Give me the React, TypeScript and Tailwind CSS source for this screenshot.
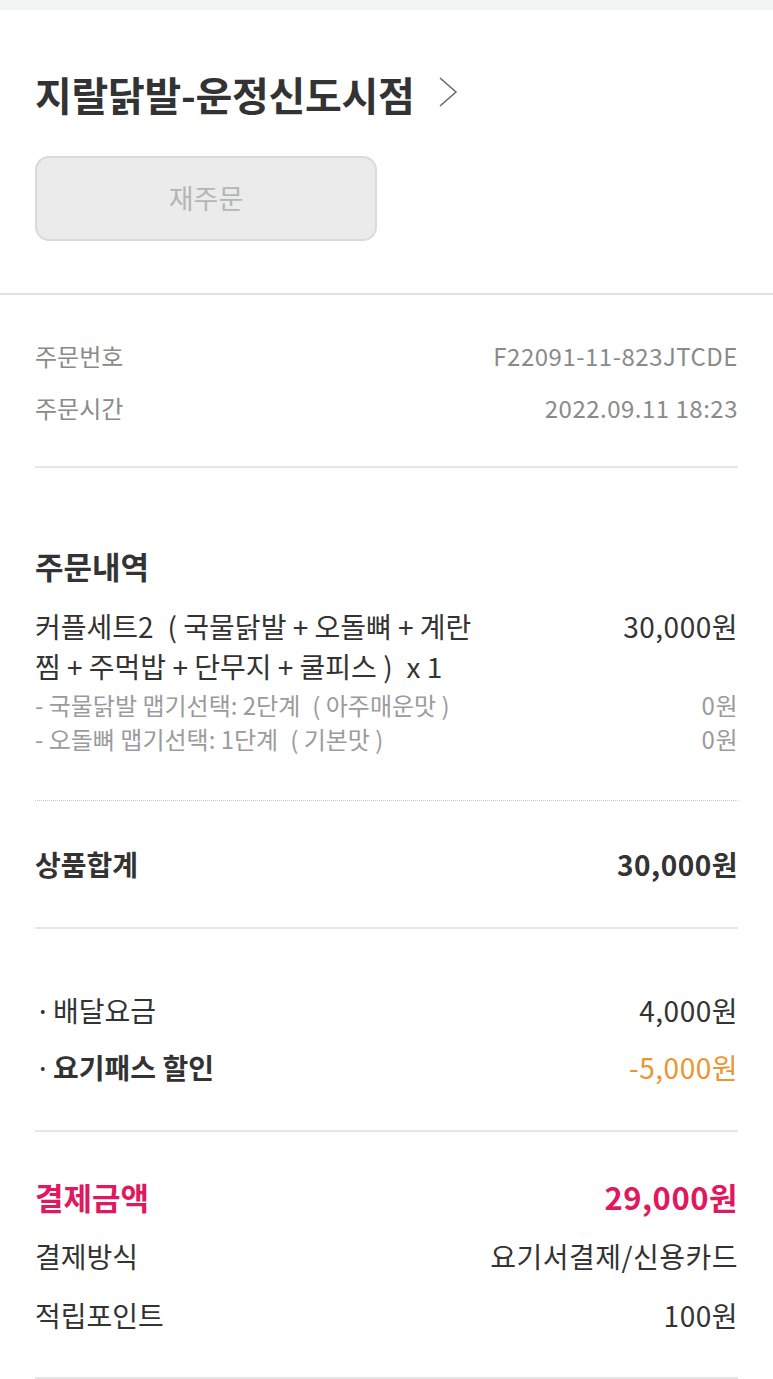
import React from 'react'

const font = { fontFamily: '"Noto Sans CJK KR", "Noto Sans", sans-serif' }

function Row({ label, value, className = '' }: { label: React.ReactNode; value: React.ReactNode; className?: string }) {
  return (
    <div className={`flex items-center justify-between ${className}`}>
      <span>{label}</span>
      <span className="tracking-[0.5px]">{value}</span>
    </div>
  )
}

export default function App() {
  return (
    <div className="w-[773px] min-h-[1379px] bg-white text-[#333]" style={font}>
      <div className="h-[10px] bg-[#f1f4f4]" />

      {/* 가게 정보 */}
      <div className="px-[35px] pt-[62px] pb-[52px]">
        <div className="flex items-center gap-[22px]">
          <h1 className="text-[40px] leading-[44px] font-bold tracking-[-0.3px] text-[#333]">지랄닭발-운정신도시점</h1>
          <svg width="22" height="32" viewBox="0 0 22 32" fill="none" className="mt-[-4px]">
            <polyline points="3,2 19,16 3,30" stroke="#666" strokeWidth="1.5" fill="none" />
          </svg>
        </div>
        <button className="mt-[40px] w-[342px] h-[85px] rounded-[14px] bg-[#ebebeb] border-2 border-[#dadada] text-[27px] text-[#b5b5b5]">
          재주문
        </button>
      </div>
      <div className="h-[2px] bg-[#e1e1e1]" />

      <div className="px-[35px]">
        {/* 주문번호 */}
        <div className="pt-[45px] pb-[42px] text-[24px] leading-[32px] text-[#8a8a8a] flex flex-col gap-[20px]">
          <Row label="주문번호" value="F22091-11-823JTCDE" />
          <Row label="주문시간" value="2022.09.11 18:23" />
        </div>
        <div className="h-[2px] bg-[#e6e6e6]" />

        {/* 주문내역 */}
        <div className="pt-[78px]">
          <h2 className="text-[31px] leading-[40px] font-bold">주문내역</h2>
          <div className="mt-[20px] flex justify-between text-[28px] leading-[40px]">
            <span>
              커플세트2{'\u2002'}(&nbsp;국물닭발 + 오돌뼈 + 계란
              <br />
              찜 + 주먹밥 + 단무지 + 쿨피스&nbsp;){'\u2002'}x 1
            </span>
            <span className="tracking-[0.5px]">30,000원</span>
          </div>
          <div className="mt-[2px] text-[24px] leading-[34px] text-[#9b9b9b]">
            <Row label={<>- 국물닭발 맵기선택: 2단계{'\u2002'}(&nbsp;아주매운맛&nbsp;)</>} value="0원" />
            <Row label={<>- 오돌뼈 맵기선택: 1단계{'\u2002'}(&nbsp;기본맛&nbsp;)</>} value="0원" />
          </div>
          <div className="mt-[44px] border-t border-dotted border-[#c8c8c8]" />
        </div>

        {/* 상품합계 */}
        <div className="pt-[43px] pb-[43px] text-[28px] leading-[40px] font-bold">
          <Row label="상품합계" value="30,000원" />
        </div>
        <div className="h-[2px] bg-[#e6e6e6]" />

        {/* 배달요금 / 할인 */}
        <div className="pt-[61px] pb-[43px] text-[28px] leading-[40px] flex flex-col gap-[17px]">
          <Row
            label={<span className="flex items-center"><span className="w-[18px]">·</span>배달요금</span>}
            value="4,000원"
          />
          <Row
            label={<span className="flex items-center font-bold"><span className="w-[18px] font-normal">·</span>요기패스 할인</span>}
            value={<span className="text-[#ea9630]">-5,000원</span>}
          />
        </div>
        <div className="h-[2px] bg-[#e6e6e6]" />

        {/* 결제금액 */}
        <div className="pt-[45px] pb-[42px] text-[28px] leading-[40px] flex flex-col gap-[19px]">
          <Row className="text-[31px] font-bold text-[#e0195f]" label="결제금액" value="29,000원" />
          <Row label="결제방식" value="요기서결제/신용카드" />
          <Row label="적립포인트" value="100원" />
        </div>
        <div className="h-[2px] bg-[#e6e6e6]" />
      </div>
    </div>
  )
}
